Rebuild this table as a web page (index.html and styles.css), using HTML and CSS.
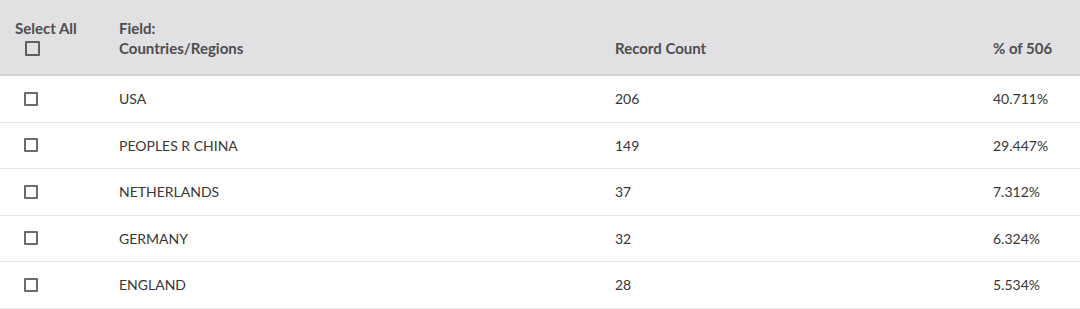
FILE: index.html
```html
<!DOCTYPE html>
<html>
<head>
<meta charset="utf-8">
<link rel="stylesheet" href="styles.css">
</head>
<body>
<div class="table">
  <div class="row head">
    <div class="c-sel">
      <div>Select All</div>
      <span class="cb cb-head"></span>
    </div>
    <div class="c-field">Field:<br>Countries/Regions</div>
    <div class="c-count">Record Count</div>
    <div class="c-pct">% of 506</div>
  </div>
  <div class="row"><div class="c-sel"><span class="cb"></span></div><div class="c-field">USA</div><div class="c-count">206</div><div class="c-pct">40.711%</div></div>
  <div class="row"><div class="c-sel"><span class="cb"></span></div><div class="c-field">PEOPLES R CHINA</div><div class="c-count">149</div><div class="c-pct">29.447%</div></div>
  <div class="row"><div class="c-sel"><span class="cb"></span></div><div class="c-field">NETHERLANDS</div><div class="c-count">37</div><div class="c-pct">7.312%</div></div>
  <div class="row"><div class="c-sel"><span class="cb"></span></div><div class="c-field">GERMANY</div><div class="c-count">32</div><div class="c-pct">6.324%</div></div>
  <div class="row"><div class="c-sel"><span class="cb"></span></div><div class="c-field">ENGLAND</div><div class="c-count">28</div><div class="c-pct">5.534%</div></div>
</div>
</body>
</html>
```
FILE: styles.css
```css
html, body {
  margin: 0;
  padding: 0;
  background: #ffffff;
}
body {
  font-family: Lato, "Liberation Sans", sans-serif;
  font-size: 14px;
  color: #363636;
}
.table {
  width: 1080px;
}
.row {
  display: grid;
  grid-template-columns: 119px 496px 378px 1fr;
  align-items: center;
  height: 46.5px;
  box-sizing: border-box;
  border-bottom: 1.5px solid #e9e9ea;
}
.row .c-sel {
  padding-left: 24px;
  display: flex;
  align-items: center;
}
.head {
  height: 76px;
  background: #e1e1e3;
  border-bottom: 2px solid #d2d2d5;
  font-size: 15px;
  font-weight: 700;
  color: #4d4d4f;
  line-height: 20px;
  align-items: start;
  padding-top: 18px;
}
.head .c-sel {
  padding-left: 15px;
  display: block;
}
.head .c-count, .head .c-pct {
  padding-top: 20px;
}
.cb {
  display: block;
  width: 14px;
  height: 14px;
  box-sizing: border-box;
  border: 2px solid #6b6b6b;
  border-radius: 1px;
  background: #fff;
}
.cb-head {
  margin-left: 10px;
  margin-top: 3px;
  width: 15px;
  height: 15px;
  background: transparent;
  border-color: #5f5f61;
}
```
